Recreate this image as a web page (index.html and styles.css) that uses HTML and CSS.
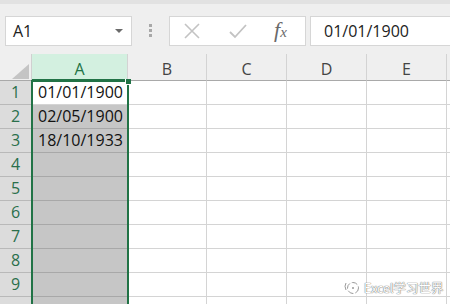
FILE: index.html
```html
<html>

<head>
    <title>Book1 - Excel</title>
    <meta name="viewport" content="width=device-width, initial-scale=1.0">
    <link rel="stylesheet" href="styles.css">
</head>

<body>
    <div id="formulabar">
        <div class="namebox">
            <span>A1</span>
            <span class="dropdown"></span>
        </div>
        <div class="grip">
            <span></span>
            <span></span>
            <span></span>
        </div>
        <div class="buttons">
            <svg class="icon" width="16" height="16" viewBox="0 0 16 16">
                <path d="M1 1 L15 15 M15 1 L1 15" stroke="#c3c3c3" stroke-width="1.6" fill="none" />
            </svg>
            <svg class="icon" width="18" height="16" viewBox="0 0 18 16">
                <path d="M1 9 L6 14 L17 2" stroke="#c3c3c3" stroke-width="1.8" fill="none" />
            </svg>
            <span class="fx">f<span>x</span></span>
        </div>
        <div class="input">01/01/1900</div>
    </div>

    <div id="sheet">
        <div class="corner">
            <svg width="17" height="15" viewBox="0 0 17 15">
                <polygon points="17,0 17,15 0,15" fill="#c4c4c4" />
            </svg>
        </div>
        <div class="colhead active">A</div>
        <div class="colhead">B</div>
        <div class="colhead">C</div>
        <div class="colhead">D</div>
        <div class="colhead">E</div>
        <div class="colhead"></div>

        <div class="rowhead">1</div>
        <div class="cell first">01/01/1900</div>
        <div class="cell"></div><div class="cell"></div><div class="cell"></div><div class="cell"></div><div class="cell"></div>

        <div class="rowhead">2</div>
        <div class="cell sel">02/05/1900</div>
        <div class="cell"></div><div class="cell"></div><div class="cell"></div><div class="cell"></div><div class="cell"></div>

        <div class="rowhead">3</div>
        <div class="cell sel">18/10/1933</div>
        <div class="cell"></div><div class="cell"></div><div class="cell"></div><div class="cell"></div><div class="cell"></div>

        <div class="rowhead">4</div>
        <div class="cell sel"></div>
        <div class="cell"></div><div class="cell"></div><div class="cell"></div><div class="cell"></div><div class="cell"></div>

        <div class="rowhead">5</div>
        <div class="cell sel"></div>
        <div class="cell"></div><div class="cell"></div><div class="cell"></div><div class="cell"></div><div class="cell"></div>

        <div class="rowhead">6</div>
        <div class="cell sel"></div>
        <div class="cell"></div><div class="cell"></div><div class="cell"></div><div class="cell"></div><div class="cell"></div>

        <div class="rowhead">7</div>
        <div class="cell sel"></div>
        <div class="cell"></div><div class="cell"></div><div class="cell"></div><div class="cell"></div><div class="cell"></div>

        <div class="rowhead">8</div>
        <div class="cell sel"></div>
        <div class="cell"></div><div class="cell"></div><div class="cell"></div><div class="cell"></div><div class="cell"></div>

        <div class="rowhead">9</div>
        <div class="cell sel"></div>
        <div class="cell"></div><div class="cell"></div><div class="cell"></div><div class="cell"></div><div class="cell"></div>

        <div class="rowhead"></div>
        <div class="cell sel"></div>
        <div class="cell"></div><div class="cell"></div><div class="cell"></div><div class="cell"></div><div class="cell"></div>

        <div class="selection"><span class="handle"></span></div>
        <div class="watermark">
            <svg width="17" height="15" viewBox="0 0 17 15">
                <path d="M3 3 Q1 6 3 10" stroke="#999" stroke-width="1" fill="none" />
                <circle cx="10" cy="8" r="5.5" stroke="#999" stroke-width="1" fill="none" stroke-dasharray="6 2" />
                <circle cx="10" cy="8" r="1" fill="#999" />
            </svg>
            <span>Excel学习世界</span>
        </div>
    </div>
</body>

</html>
```

FILE: styles.css
```css
body {
    margin: 0;
    width: 450px;
    height: 304px;
    overflow: hidden;
    font-family: "Open Sans", "Noto Sans", sans-serif;
    background-color: white;
}

#formulabar {
    display: flex;
    height: 54px;
    padding-top: 12px;
    box-sizing: border-box;
    border-top: 4px solid #e2e2e2;
    background-color: #efefef;
}

.namebox {
    display: flex;
    align-items: center;
    justify-content: space-between;
    width: 127px;
    height: 30px;
    margin-left: 5px;
    padding: 0 8px 0 7px;
    box-sizing: border-box;
    background-color: white;
    border: 1px solid #d6d6d6;
    font-size: 16px;
    color: #222;
}

.dropdown {
    width: 0;
    height: 0;
    border-left: 4px solid transparent;
    border-right: 4px solid transparent;
    border-top: 4px solid #6b6b6b;
}

.grip {
    display: flex;
    flex-direction: column;
    align-items: center;
    gap: 2px;
    width: 37px;
    padding-top: 8px;
}

.grip span {
    width: 3px;
    height: 3px;
    background-color: #a8a8a8;
}

.buttons {
    display: flex;
    align-items: center;
    width: 137px;
    height: 30px;
    box-sizing: border-box;
    padding-left: 14px;
    background-color: white;
    border: 1px solid #d6d6d6;
}

.buttons .icon:nth-child(2) {
    margin-left: 29px;
}

.fx {
    margin-left: 27px;
    font-family: "Liberation Serif", serif;
    font-style: italic;
    font-size: 22px;
    line-height: 22px;
    color: #6a6a6a;
}

.fx span {
    font-size: 15px;
}

.input {
    flex: 1;
    height: 30px;
    margin-left: 4px;
    margin-right: -4px;
    padding-left: 13px;
    box-sizing: border-box;
    background-color: white;
    border: 1px solid #d6d6d6;
    font-size: 16px;
    line-height: 28px;
    color: #222;
}

#sheet {
    position: relative;
    display: grid;
    grid-template-columns: 32px 96px 79px 80px 80px 80px 1fr;
    grid-template-rows: 27px;
    grid-auto-rows: 24px;
    background-color: white;
}

.corner,
.colhead {
    box-sizing: border-box;
    background-color: #efefef;
    border-bottom: 1px solid #a9a9a9;
}

.corner {
    display: flex;
    align-items: flex-end;
    justify-content: flex-end;
    padding: 0 2px 1px 0;
    border-right: 1px solid #d0d0d0;
}

.corner svg {
    display: block;
}

.colhead {
    padding-top: 4px;
    text-align: center;
    font-size: 16px;
    line-height: 22px;
    color: #444;
    border-right: 1px solid #d3d3d3;
}

.colhead.active {
    background-color: #d3f0e0;
    color: #217346;
    border-bottom: 2px solid #217346;
}

.rowhead {
    box-sizing: border-box;
    background-color: #dcdcdc;
    border-bottom: 1px solid #b9b9b9;
    border-right: 1px solid #b9b9b9;
    text-align: center;
    font-size: 16px;
    line-height: 23px;
    color: #2a6f4b;
}

.cell {
    box-sizing: border-box;
    border-right: 1px solid #d4d4d4;
    border-bottom: 1px solid #d4d4d4;
    padding-left: 6px;
    font-size: 16px;
    line-height: 23px;
    color: #111;
    white-space: nowrap;
}

.cell.sel {
    background-color: #c6c6c6;
    border-bottom-color: #a8a8a8;
}

.selection {
    position: absolute;
    left: 31px;
    top: 26px;
    width: 98px;
    height: 260px;
    box-sizing: border-box;
    border: 2px solid #217346;
}

.handle {
    position: absolute;
    right: -4px;
    top: -3px;
    width: 5px;
    height: 5px;
    background-color: #217346;
    border: 1px solid white;
    border-top: none;
    border-right: none;
}

.watermark {
    position: absolute;
    left: 343px;
    top: 224px;
    display: flex;
    align-items: center;
    gap: 4px;
    font-family: "Noto Sans CJK SC", sans-serif;
    font-size: 12.5px;
    color: white;
    text-shadow: 0 0 1px #666, 0 0 1px #666;
}
```
